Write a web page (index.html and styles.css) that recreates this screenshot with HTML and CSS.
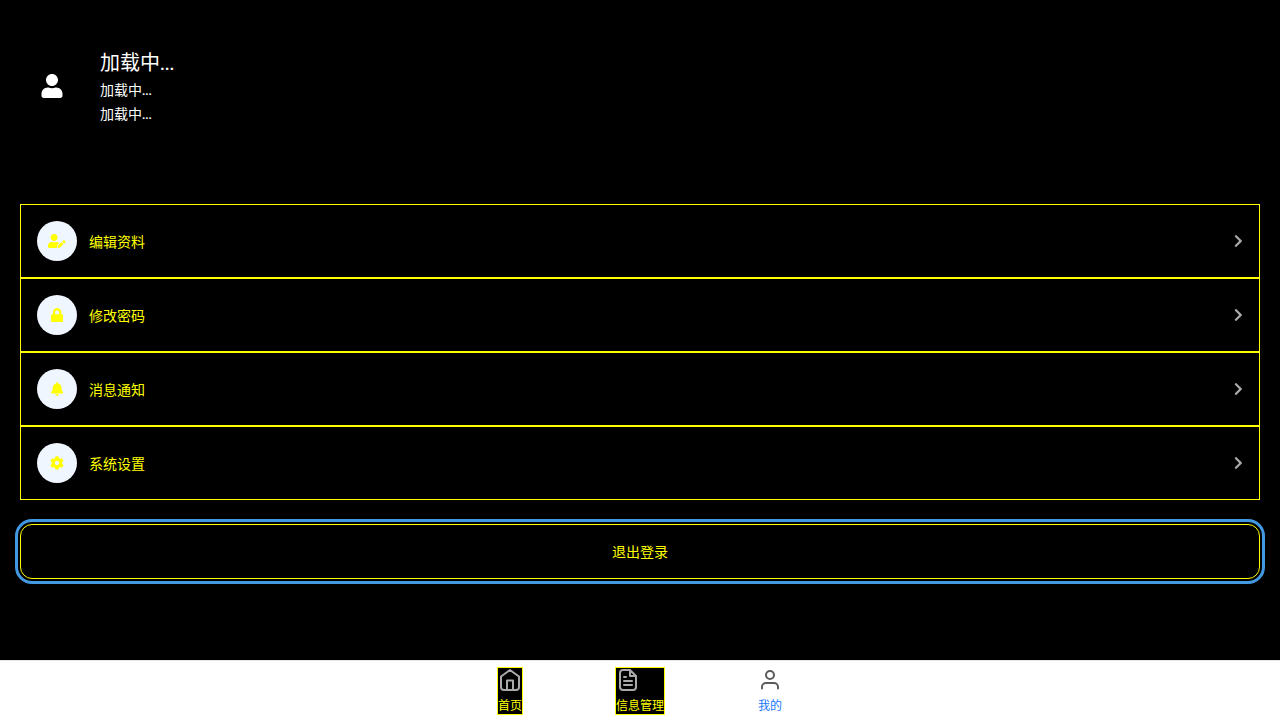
FILE: index.html
```html
<!DOCTYPE html>
<html lang="zh-CN">
<head>
<meta charset="utf-8">
<meta name="viewport" content="width=device-width, initial-scale=1">
<title>我的</title>
<link rel="stylesheet" href="styles.css">
</head>
<body>
<header class="profile">
  <div class="avatar">
    <svg class="avatar-icon" viewBox="0 0 448 512" aria-hidden="true"><path d="M224 256c70.700 0 128-57.300 128-128S294.700 0 224 0 96 57.300 96 128s57.300 128 128 128zm89.600 32h-16.700c-22.200 10.200-46.900 16-72.900 16s-50.600-5.800-72.900-16h-16.700C60.200 288 0 348.200 0 422.400V464c0 26.500 21.500 48 48 48h352c26.500 0 48-21.500 48-48v-41.600c0-74.200-60.200-134.400-134.400-134.400z"/></svg>
  </div>
  <div class="info">
    <h1 class="name">加载中...</h1>
    <p class="detail">加载中...</p>
    <p class="detail">加载中...</p>
  </div>
</header>
<main class="content">
  <div class="menu">
    <button class="item" type="button">
      <span class="badge"><svg class="icon" viewBox="0 0 640 512" aria-hidden="true"><path d="M224 256c70.700 0 128-57.300 128-128S294.700 0 224 0 96 57.300 96 128s57.300 128 128 128zm89.600 32h-16.700c-22.200 10.200-46.900 16-72.900 16s-50.600-5.800-72.900-16h-16.700C60.200 288 0 348.200 0 422.400V464c0 26.500 21.500 48 48 48h274.900c-2.400-6.800-3.400-14-2.600-21.300l6.800-60.900 1.200-11.100 7.900-7.900 77.300-77.300c-24.500-27.700-60-45.500-99.900-45.500zm45.300 145.300l-6.800 61c-1.100 10.200 7.500 18.800 17.600 17.600l60.900-6.800 137.900-137.900-71.700-71.700-137.900 137.800zM633 268.900L595.100 231c-9.300-9.300-24.500-9.300-33.800 0l-37.800 37.800-4.100 4.100 71.800 71.700 41.800-41.800c9.300-9.400 9.300-24.500 0-33.900z"/></svg></span>
      <span class="label">编辑资料</span>
      <svg class="icon arrow" viewBox="0 0 320 512" aria-hidden="true"><path d="M285.500 273L91.100 467.300c-9.400 9.400-24.600 9.400-33.900 0l-22.700-22.700c-9.400-9.400-9.400-24.500 0-33.900L188.500 256 34.500 101.300c-9.300-9.400-9.300-24.500 0-33.900l22.700-22.700c9.400-9.400 24.600-9.400 33.900 0L285.500 239c9.400 9.400 9.400 24.600 0 34z"/></svg>
    </button>
    <button class="item" type="button">
      <span class="badge"><svg class="icon" viewBox="0 0 448 512" aria-hidden="true"><path d="M400 224h-24v-72C376 68.200 307.800 0 224 0S72 68.200 72 152v72H48c-26.500 0-48 21.500-48 48v192c0 26.500 21.500 48 48 48h352c26.500 0 48-21.500 48-48V272c0-26.500-21.500-48-48-48zm-104 0H152v-72c0-39.700 32.300-72 72-72s72 32.300 72 72v72z"/></svg></span>
      <span class="label">修改密码</span>
      <svg class="icon arrow" viewBox="0 0 320 512" aria-hidden="true"><path d="M285.500 273L91.100 467.300c-9.400 9.400-24.600 9.400-33.900 0l-22.700-22.700c-9.400-9.400-9.400-24.500 0-33.900L188.500 256 34.500 101.300c-9.300-9.400-9.300-24.500 0-33.900l22.700-22.700c9.400-9.400 24.600-9.400 33.900 0L285.500 239c9.400 9.400 9.400 24.600 0 34z"/></svg>
    </button>
    <button class="item" type="button">
      <span class="badge"><svg class="icon" viewBox="0 0 448 512" aria-hidden="true"><path d="M224 512c35.300 0 63.900-28.700 63.900-64H160.100c0 35.300 28.600 64 63.900 64zm215.400-149.700c-19.300-20.800-55.500-52-55.500-154.300 0-77.700-54.500-139.900-127.900-155.200V32c0-17.700-14.300-32-32-32s-32 14.300-32 32v20.800C118.600 68.100 64.100 130.300 64.100 208c0 102.300-36.200 133.500-55.500 154.300-6 6.400-8.700 14.100-8.600 21.700.1 16.400 13 32 32.100 32h383.800c19.100 0 32-15.600 32.100-32 .1-7.600-2.600-15.300-8.600-21.700z"/></svg></span>
      <span class="label">消息通知</span>
      <svg class="icon arrow" viewBox="0 0 320 512" aria-hidden="true"><path d="M285.500 273L91.100 467.300c-9.400 9.400-24.600 9.400-33.900 0l-22.700-22.700c-9.400-9.400-9.400-24.500 0-33.900L188.500 256 34.500 101.300c-9.300-9.400-9.300-24.500 0-33.900l22.700-22.700c9.400-9.400 24.600-9.400 33.900 0L285.500 239c9.400 9.400 9.400 24.600 0 34z"/></svg>
    </button>
    <button class="item" type="button">
      <span class="badge"><svg class="icon" viewBox="0 0 512 512" aria-hidden="true"><path d="M487.400 315.700l-42.600-24.600c4.300-23.200 4.300-47 0-70.200l42.600-24.600c4.900-2.800 7.100-8.600 5.500-14-11.100-35.600-30-67.800-54.700-94.600-3.800-4.100-10-5.100-14.800-2.300L380.800 110c-17.900-15.400-38.500-27.300-60.800-35.100V25.800c0-5.600-3.900-10.500-9.400-11.700-36.700-8.200-74.300-7.800-109.200 0-5.500 1.200-9.400 6.100-9.400 11.700V75c-22.200 7.900-42.800 19.800-60.800 35.100L88.700 85.500c-4.900-2.800-11-1.900-14.800 2.300-24.700 26.700-43.600 58.900-54.700 94.600-1.700 5.400.6 11.200 5.500 14L67.300 221c-4.300 23.200-4.300 47 0 70.200l-42.600 24.600c-4.900 2.800-7.100 8.600-5.500 14 11.100 35.600 30 67.800 54.700 94.600 3.800 4.100 10 5.100 14.800 2.300l42.600-24.600c17.900 15.400 38.500 27.300 60.800 35.100v49.200c0 5.600 3.900 10.500 9.400 11.700 36.700 8.200 74.300 7.800 109.200 0 5.500-1.200 9.400-6.100 9.400-11.700v-49.200c22.200-7.900 42.800-19.800 60.800-35.100l42.600 24.600c4.900 2.800 11 1.900 14.800-2.300 24.700-26.700 43.600-58.900 54.700-94.600 1.500-5.500-.7-11.300-5.600-14.100zM256 336c-44.100 0-80-35.900-80-80s35.900-80 80-80 80 35.900 80 80-35.900 80-80 80z"/></svg></span>
      <span class="label">系统设置</span>
      <svg class="icon arrow" viewBox="0 0 320 512" aria-hidden="true"><path d="M285.500 273L91.100 467.300c-9.400 9.400-24.600 9.400-33.900 0l-22.700-22.700c-9.400-9.400-9.400-24.500 0-33.900L188.500 256 34.500 101.300c-9.300-9.400-9.300-24.500 0-33.900l22.700-22.700c9.400-9.400 24.600-9.400 33.900 0L285.500 239c9.400 9.400 9.400 24.600 0 34z"/></svg>
    </button>
  </div>
  <button class="logout" type="button">退出登录</button>
</main>
<nav class="tabbar">
  <div class="tabs">
    <a class="tab boxed" href="#home">
      <svg class="tab-icon" viewBox="0 0 24 24" aria-hidden="true"><path d="M3 8.500 12 2l9 6.500V19a3 3 0 0 1-3 3H6a3 3 0 0 1-3-3zM9 22V12.500h6V22"/></svg>
      <span>首页</span>
    </a>
    <a class="tab boxed" href="#info">
      <svg class="tab-icon" viewBox="0 0 24 24" aria-hidden="true"><path d="M14 2H7a3 3 0 0 0-3 3v14a3 3 0 0 0 3 3h10a3 3 0 0 0 3-3V8zM14 2v6h6M8 9h2M8 13h8M8 17h8"/></svg>
      <span>信息管理</span>
    </a>
    <a class="tab current" href="#me" aria-current="page">
      <svg class="tab-icon" viewBox="0 0 24 24" aria-hidden="true"><circle cx="12" cy="7" r="4"/><path d="M4 20.500V19a4 4 0 0 1 4-4h8a4 4 0 0 1 4 4v1.500"/></svg>
      <span>我的</span>
    </a>
  </div>
</nav>
</body>
</html>
```
FILE: styles.css
```css
* {
  box-sizing: border-box;
}

body {
  margin: 0;
  min-height: 100vh;
  display: flex;
  flex-direction: column;
  background: #000;
  color: #fff;
  font: 14px/24px "Noto Sans CJK SC", sans-serif;
}

button {
  font: inherit;
  color: #ff0;
  background: #000;
  border: 1px solid #ff0;
}

.profile {
  display: flex;
  align-items: center;
  gap: 16px;
  padding: 46px 20px 78px;
  font-family: Lato, "Noto Sans CJK SC", sans-serif;
}

.avatar {
  width: 64px;
  height: 64px;
  display: flex;
  align-items: center;
  justify-content: center;
}

.avatar-icon {
  width: 22px;
  height: 24px;
  fill: #fff;
}

.name {
  margin: 0;
  font-size: 20px;
  line-height: 32px;
  font-weight: 400;
}

.detail {
  margin: 0;
}

.content {
  flex: 1;
  padding: 0 20px 80px;
}

.menu {
  display: flex;
  flex-direction: column;
}

.item {
  display: flex;
  align-items: center;
  gap: 12px;
  padding: 16px;
  text-align: left;
}

.badge {
  width: 40px;
  height: 40px;
  display: flex;
  align-items: center;
  justify-content: center;
  border-radius: 50%;
  background: #eff6ff;
}

.icon {
  height: 14px;
  fill: #ff0;
}

.label {
  flex: 1;
}

.arrow {
  fill: #aaa;
}

.logout {
  display: block;
  width: 100%;
  margin-top: 24px;
  padding: 15px;
  line-height: 23px;
  border-radius: 12px;
  outline: 3px solid #4299e1;
  outline-offset: 2px;
}

.tabbar {
  position: fixed;
  left: 0;
  right: 0;
  bottom: 0;
  background: #fff;
  border-top: 1px solid #e5e7eb;
}

.tabs {
  display: grid;
  grid-template-columns: repeat(3, 130px);
  justify-content: center;
  justify-items: center;
  padding: 6px 0 5px;
}

.tab {
  display: flex;
  flex-direction: column;
  padding: 1px;
  color: #1677ff;
  font-size: 12px;
  line-height: 18px;
  text-decoration: none;
}

.tab-icon {
  width: 24px;
  height: 24px;
  margin-bottom: 4px;
  fill: none;
  stroke: #5c5c5c;
  stroke-width: 2;
  stroke-linecap: round;
  stroke-linejoin: round;
}

.boxed {
  padding: 0;
  border: 1px solid #ff0;
  background: #000;
  color: #ff0;
}

.boxed .tab-icon {
  stroke: #aaa;
}
```
